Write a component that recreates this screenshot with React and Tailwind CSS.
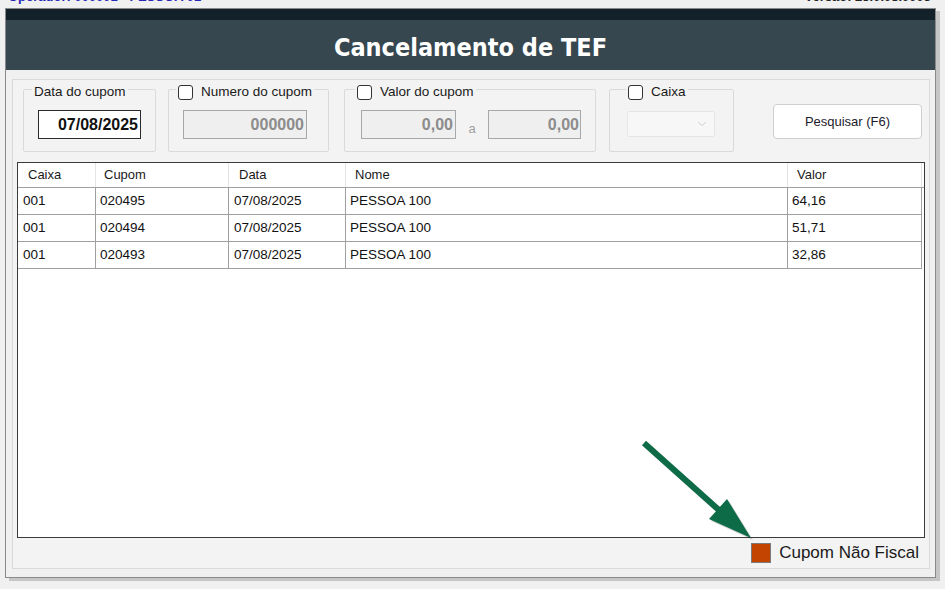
import React from "react";
import { ChevronDown } from "lucide-react";

const rows = [
  ["001", "020495", "07/08/2025", "PESSOA 100", "64,16"],
  ["001", "020494", "07/08/2025", "PESSOA 100", "51,71"],
  ["001", "020493", "07/08/2025", "PESSOA 100", "32,86"],
];

const headers = [
  ["Caixa", "pl-[10px]"],
  ["Cupom", "pl-[8px]"],
  ["Data", "pl-[10px]"],
  ["Nome", "pl-[9px]"],
  ["Valor", "pl-[9px]"],
];

const cellPad = ["pl-[5px]", "pl-[4px]", "pl-[5px]", "pl-[4px]", "pl-[4px]"];

function Check() {
  return <span className="w-[15px] h-[15px] border border-[#333] rounded-[3px] bg-white shrink-0" />;
}

function GroupLabel({ children, left }) {
  return (
    <div className={`absolute top-[-6px] ${left} h-[16px] px-[2px] bg-[#f3f3f3] flex items-center gap-[8px] text-[13.5px] leading-none text-[#1a1a1a]`}>
      {children}
    </div>
  );
}

export default function App() {
  return (
    <div className="w-[945px] h-[589px] bg-[#f0f0f0] overflow-hidden relative font-['Liberation_Sans',Arial,sans-serif]">
      {/* clipped status strip */}
      <div className="h-[8px] overflow-hidden flex justify-between px-[8px]">
        <span className="mt-[-10px] text-[13px] leading-[13px] font-bold text-[#2626b8]">Operador: 000001 - PESSOA 01</span>
        <span className="mt-[-10px] mr-[6px] text-[13px] leading-[13px] font-bold text-[#222]">Versão: 25.0.08.0003</span>
      </div>

      {/* window */}
      <div className="ml-[5px] w-[931px] h-[570px] border border-[#8a8a8a] shadow-[4px_3px_0_0_#c6c6c6] flex flex-col bg-[#f0f0f0]">
        <div className="h-[11px] bg-[#13222a]" />
        <div className="h-[50px] bg-[#36474f] flex items-center justify-center pt-[4px]">
          <span className="text-white font-bold text-[25px] leading-none [font-stretch:semi-condensed] font-['DejaVu_Sans_Condensed','DejaVu_Sans',sans-serif]">
            Cancelamento de TEF
          </span>
        </div>

        <div className="flex-1 pt-[9px] pl-[6px] pr-[5px] pb-[8px] flex">
          <div className="flex-1 border border-[#dadada] bg-[#f3f3f3] flex flex-col">
            {/* filters */}
            <div className="mt-[9px] pl-[10px] flex items-start">
              <div className="relative w-[133px] h-[63px] border border-[#dadada] rounded-[2px] pt-[20px] pl-[14px]">
                <GroupLabel left="left-[8px]">Data do cupom</GroupLabel>
                <div className="w-[103px] h-[29px] bg-white border border-[#2a2a2a] flex items-center justify-end pr-[2px] text-[16px] font-bold text-[#111]">
                  07/08/2025
                </div>
              </div>

              <div className="relative ml-[12px] w-[161px] h-[63px] border border-[#dadada] rounded-[2px] pt-[20px] pl-[14px]">
                <GroupLabel left="left-[7px]"><Check />Numero do cupom</GroupLabel>
                <div className="w-[124px] h-[29px] bg-[#efefef] border border-[#a8a8a8] flex items-center justify-end pr-[2px] text-[16px] font-bold text-[#8c8c8c]">
                  000000
                </div>
              </div>

              <div className="relative ml-[15px] w-[252px] h-[63px] border border-[#dadada] rounded-[2px] pt-[20px] pl-[16px] flex items-start">
                <GroupLabel left="left-[10px]"><Check />Valor do cupom</GroupLabel>
                <div className="w-[95px] h-[29px] bg-[#efefef] border border-[#a8a8a8] flex items-center justify-end pr-[2px] text-[16px] font-bold text-[#8c8c8c]">
                  0,00
                </div>
                <div className="w-[32px] h-[29px] flex items-end justify-center pb-[4px] text-[13px] leading-none text-[#a0a0a0]">a</div>
                <div className="w-[93px] h-[29px] bg-[#efefef] border border-[#a8a8a8] flex items-center justify-end pr-[1px] text-[16px] font-bold text-[#8c8c8c]">
                  0,00
                </div>
              </div>

              <div className="relative ml-[13px] w-[125px] h-[63px] border border-[#dadada] rounded-[2px] pt-[21px] pl-[17px]">
                <GroupLabel left="left-[16px]"><Check />Caixa</GroupLabel>
                <div className="w-[88px] h-[26px] bg-[#f7f7f7] border border-[#e6e6e6] rounded-[2px] flex items-center justify-end pr-[5px]">
                  <ChevronDown size={14} strokeWidth={1.3} color="#bdbdbd" />
                </div>
              </div>

              <button className="ml-[39px] mt-[15px] w-[149px] h-[35px] bg-white border border-[#cfcfcf] rounded-[4px] text-[13px] text-[#1b1b2b] flex items-center justify-center">
                Pesquisar (F6)
              </button>
            </div>

            {/* grid */}
            <div className="mx-[4px] mt-[10px] h-[376px] border border-[#3a3a3a] bg-white">
              <div className="grid grid-cols-[78px_133px_117px_442px_134px] h-[25px] border-b border-[#a0a0a0]">
                {headers.map(([h, p], i) => (
                  <div key={i} className={`${p} flex items-center border-r border-[#e4e4e4] text-[13px] text-[#1a1a1a]`}>
                    {h}
                  </div>
                ))}
              </div>
              {rows.map((r, ri) => (
                <div key={ri} className="grid grid-cols-[78px_133px_117px_442px_134px]">
                  {r.map((c, ci) => (
                    <div key={ci} className={`${cellPad[ci]} h-[27px] flex items-center border-b border-r border-[#a0a0a0] text-[13.5px] text-[#111]`}>
                      {c}
                    </div>
                  ))}
                </div>
              ))}
            </div>

            {/* legend */}
            <div className="flex-1 flex items-center justify-end pr-[10px] gap-[8px]">
              <span className="w-[20px] h-[20px] bg-[#c34400] border border-[#7a7a7a]" />
              <span className="text-[17px] text-[#1a1a1a]">Cupom Não Fiscal</span>
            </div>
          </div>
        </div>
      </div>

      {/* annotation arrow */}
      <svg className="absolute left-[638px] top-[437px] pointer-events-none" width="122" height="108" viewBox="0 0 122 108">
        <g transform="translate(2,2)" opacity="0.18">
          <line x1="6" y1="6" x2="82" y2="74" stroke="#000" strokeWidth="6" />
          <polygon points="71,82 89,62 113,101" fill="#000" />
        </g>
        <line x1="6" y1="6" x2="82" y2="74" stroke="#0d6b48" strokeWidth="6" />
        <polygon points="71,82 89,62 113,101" fill="#0d6b48" />
      </svg>
    </div>
  );
}
